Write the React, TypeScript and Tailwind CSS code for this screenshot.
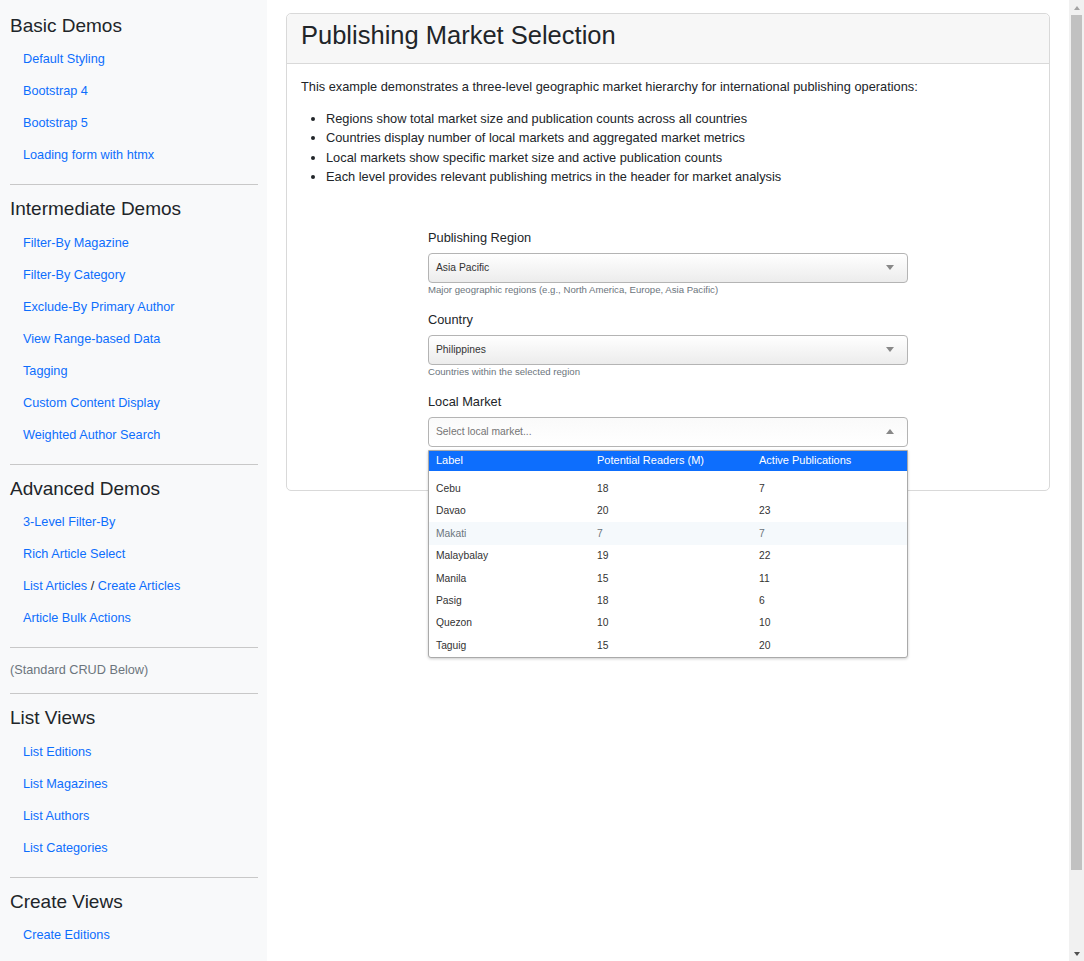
import React from 'react'

type NavItem = { label: string; extra?: string }

const basicDemos: NavItem[] = [
  { label: 'Default Styling' },
  { label: 'Bootstrap 4' },
  { label: 'Bootstrap 5' },
  { label: 'Loading form with htmx' },
]

const intermediateDemos: NavItem[] = [
  { label: 'Filter-By Magazine' },
  { label: 'Filter-By Category' },
  { label: 'Exclude-By Primary Author' },
  { label: 'View Range-based Data' },
  { label: 'Tagging' },
  { label: 'Custom Content Display' },
  { label: 'Weighted Author Search' },
]

const advancedDemos: NavItem[] = [
  { label: '3-Level Filter-By' },
  { label: 'Rich Article Select' },
  { label: 'List Articles', extra: 'Create Articles' },
  { label: 'Article Bulk Actions' },
]

const listViews: NavItem[] = [
  { label: 'List Editions' },
  { label: 'List Magazines' },
  { label: 'List Authors' },
  { label: 'List Categories' },
]

const createViews: NavItem[] = [
  { label: 'Create Editions' },
  { label: 'Create Magazines' },
  { label: 'Create Authors' },
  { label: 'Create Categories' },
]

const markets = [
  { label: 'Cebu', readers: 18, pubs: 7 },
  { label: 'Davao', readers: 20, pubs: 23 },
  { label: 'Makati', readers: 7, pubs: 7 },
  { label: 'Malaybalay', readers: 19, pubs: 22 },
  { label: 'Manila', readers: 15, pubs: 11 },
  { label: 'Pasig', readers: 18, pubs: 6 },
  { label: 'Quezon', readers: 10, pubs: 10 },
  { label: 'Taguig', readers: 15, pubs: 20 },
]

function NavSection({ title, items }: { title: string; items: NavItem[] }) {
  return (
    <div>
      <h2 className="text-[19px] leading-[23px] text-[#212529] mb-[7.5px]">{title}</h2>
      <ul>
        {items.map((item) => (
          <li key={item.label} className="h-[32px] flex items-center pl-[13px] text-[12.7px]">
            <a href="#" className="text-[#0d6efd]">{item.label}</a>
            {item.extra && (
              <>
                <span className="text-[#212529]">&nbsp;/&nbsp;</span>
                <a href="#" className="text-[#0d6efd]">{item.extra}</a>
              </>
            )}
          </li>
        ))}
      </ul>
    </div>
  )
}

function Divider() {
  return <hr className="mt-[12px] mb-[12px] border-0 h-px bg-[#c8c8c8]" />
}

function Arrow({ up = false }: { up?: boolean }) {
  return up ? (
    <span className="w-0 h-0 border-x-[4px] border-x-transparent border-b-[5px] border-b-[#888]" />
  ) : (
    <span className="w-0 h-0 border-x-[4px] border-x-transparent border-t-[5px] border-t-[#888]" />
  )
}

function FieldLabel({ children }: { children: React.ReactNode }) {
  return <label className="block text-[12.8px] leading-[21.5px] text-[#212529] mb-[4.5px]">{children}</label>
}

function SelectField({ label, value, help }: { label: string; value: string; help: string }) {
  return (
    <div className="mb-[13px]">
      <FieldLabel>{label}</FieldLabel>
      <div className="h-[30px] flex items-center justify-between pl-[7px] pr-[13px] border border-[#b4b4b4] rounded-[4px] bg-gradient-to-b from-white to-[#ececec]">
        <span className="text-[10.3px] text-[#333]">{value}</span>
        <Arrow />
      </div>
      <p className="text-[9.6px] leading-[13px] text-[#6c757d]">{help}</p>
    </div>
  )
}

function FakeScrollbar() {
  return (
    <div className="w-[15px] shrink-0 h-full bg-[#f1f1f1] flex flex-col items-center">
      <div className="h-[15px] flex items-center justify-center">
        <span className="w-0 h-0 border-x-[3.5px] border-x-transparent border-b-[4px] border-b-[#a3a3a3]" />
      </div>
      <div className="w-[11px] h-[855px] bg-[#c1c1c1]" />
      <div className="flex-1" />
      <div className="h-[15px] flex items-center justify-center">
        <span className="w-0 h-0 border-x-[3.5px] border-x-transparent border-t-[4px] border-t-[#505050]" />
      </div>
    </div>
  )
}

export default function App() {
  return (
    <div className="flex h-[961px] overflow-hidden font-['Liberation_Sans',Arial,sans-serif] text-[#212529] bg-white">
      <div className="flex flex-1 min-w-0 overflow-hidden">
        {/* Sidebar */}
        <aside className="w-[267px] shrink-0 bg-[#f8f9fa] pl-[10px] pr-[9px] pt-[13.5px]">
          <NavSection title="Basic Demos" items={basicDemos} />
          <Divider />
          <NavSection title="Intermediate Demos" items={intermediateDemos} />
          <Divider />
          <NavSection title="Advanced Demos" items={advancedDemos} />
          <Divider />
          <p className="text-[12.7px] leading-[21px] text-[#6c757d]">(Standard CRUD Below)</p>
          <Divider />
          <NavSection title="List Views" items={listViews} />
          <Divider />
          <NavSection title="Create Views" items={createViews} />
        </aside>

        {/* Main */}
        <main className="flex-1 min-w-0 px-[19px] pt-[13px]">
          <div className="border border-[#d9d9d9] rounded-[5px]">
            <div className="bg-[#f7f7f7] border-b border-[#d9d9d9] rounded-t-[5px] px-[14px] pt-[6px] pb-[12px]">
              <h1 className="text-[25.5px] leading-[31px] text-[#212529]">Publishing Market Selection</h1>
            </div>

            <div className="px-[14px] pt-[13px] pb-[30px] text-[12.8px] leading-[19.5px]">
              <p className="mb-[12px]">
                This example demonstrates a three-level geographic market hierarchy for international publishing operations:
              </p>
              <ul className="list-disc pl-[25px]">
                <li>Regions show total market size and publication counts across all countries</li>
                <li>Countries display number of local markets and aggregated market metrics</li>
                <li>Local markets show specific market size and active publication counts</li>
                <li>Each level provides relevant publishing metrics in the header for market analysis</li>
              </ul>

              <div className="w-[480px] mx-auto mt-[40px]">
                <SelectField
                  label="Publishing Region"
                  value="Asia Pacific"
                  help="Major geographic regions (e.g., North America, Europe, Asia Pacific)"
                />
                <SelectField label="Country" value="Philippines" help="Countries within the selected region" />

                <div>
                  <FieldLabel>Local Market</FieldLabel>
                  <div className="relative">
                    <div className="h-[30px] flex items-center justify-between pl-[7px] pr-[13px] border border-[#b4b4b4] rounded-[4px] bg-gradient-to-b from-[#fafafa] to-white">
                      <span className="text-[10.3px] text-[#757575]">Select local market...</span>
                      <Arrow up />
                    </div>

                    {/* Dropdown */}
                    <div className="absolute z-10 left-0 top-[33px] w-full bg-white border border-[#aaa] rounded-b-[3px] shadow-[0_1px_3px_rgba(0,0,0,0.2)]">
                      <div className="grid grid-cols-[161px_162px_1fr] h-[20px] items-center bg-[#0d6efd] text-white text-[11px]">
                        <span className="pl-[7px]">Label</span>
                        <span className="pl-[7px]">Potential Readers (M)</span>
                        <span className="pl-[7px]">Active Publications</span>
                      </div>
                      <div className="pt-[7px]">
                        {markets.map((m) => (
                          <div
                            key={m.label}
                            className={`grid grid-cols-[161px_162px_1fr] h-[22.4px] items-center text-[10.3px] ${
                              m.label === 'Makati' ? 'bg-[#f5f9fc] text-[#6c757d]' : 'text-[#333]'
                            }`}
                          >
                            <span className="pl-[7px]">{m.label}</span>
                            <span className="pl-[7px]">{m.readers}</span>
                            <span className="pl-[7px]">{m.pubs}</span>
                          </div>
                        ))}
                      </div>
                    </div>
                  </div>
                  <p className="text-[9.6px] leading-[13px] text-[#6c757d]">Specific cities or markets within the selected country</p>
                </div>
              </div>
            </div>
          </div>
        </main>
      </div>
      <FakeScrollbar />
    </div>
  )
}
